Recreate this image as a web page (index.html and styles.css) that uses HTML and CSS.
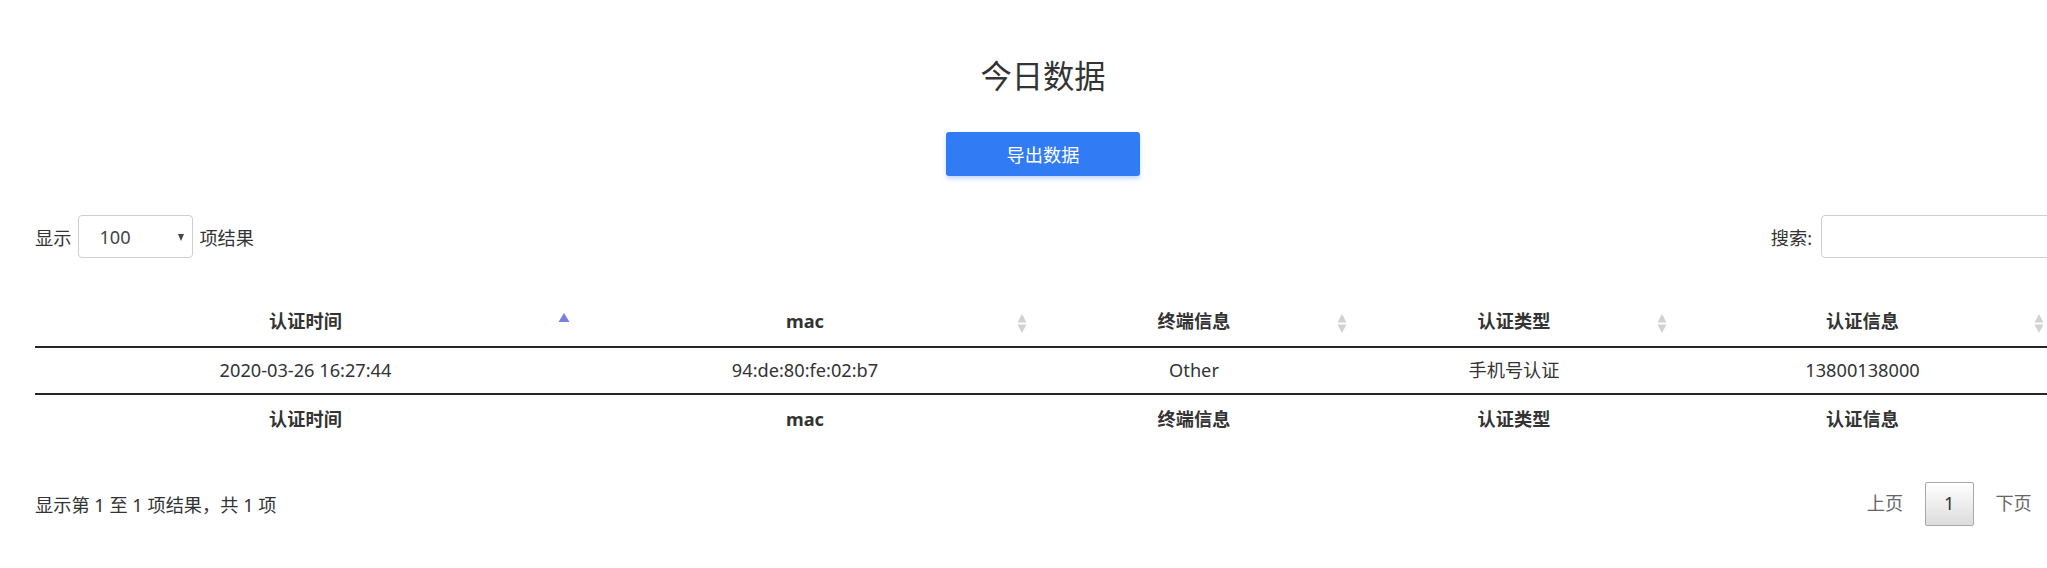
FILE: index.html
```html
<!DOCTYPE html>
<html lang="zh-CN">
<head>
<meta charset="utf-8">
<title>今日数据</title>
<link rel="stylesheet" href="styles.css">
</head>
<body>
<div class="page">
  <h2 class="title">今日数据</h2>
  <div class="actions">
    <button class="export-btn" type="button">导出数据</button>
  </div>
  <div class="toolbar">
    <div class="length">
      <span>显示</span>
      <div class="select"><span class="select-value">100</span><span class="caret"></span></div>
      <span>项结果</span>
    </div>
    <div class="filter">
      <span>搜索:</span>
      <input class="search-input" type="text">
    </div>
  </div>
  <table class="data-table">
    <colgroup>
      <col class="c1"><col class="c2"><col class="c3"><col class="c4"><col class="c5">
    </colgroup>
    <thead>
      <tr>
        <th>认证时间<svg class="sort" width="12" height="22" viewBox="0 0 12 22"><polygon points="6,0 11.5,9 0.5,9" fill="#7b7fe2"/></svg></th>
        <th>mac<svg class="sort" width="12" height="22" viewBox="0 0 12 22"><polygon points="6,1 10.5,9.5 1.5,9.5" fill="#d2d2d2"/><polygon points="1.5,11.5 10.5,11.5 6,20" fill="#d2d2d2"/></svg></th>
        <th>终端信息<svg class="sort" width="12" height="22" viewBox="0 0 12 22"><polygon points="6,1 10.5,9.5 1.5,9.5" fill="#d2d2d2"/><polygon points="1.5,11.5 10.5,11.5 6,20" fill="#d2d2d2"/></svg></th>
        <th>认证类型<svg class="sort" width="12" height="22" viewBox="0 0 12 22"><polygon points="6,1 10.5,9.5 1.5,9.5" fill="#d2d2d2"/><polygon points="1.5,11.5 10.5,11.5 6,20" fill="#d2d2d2"/></svg></th>
        <th>认证信息<svg class="sort" width="12" height="22" viewBox="0 0 12 22"><polygon points="6,1 10.5,9.5 1.5,9.5" fill="#d2d2d2"/><polygon points="1.5,11.5 10.5,11.5 6,20" fill="#d2d2d2"/></svg></th>
      </tr>
    </thead>
    <tbody>
      <tr>
        <td>2020-03-26 16:27:44</td>
        <td>94:de:80:fe:02:b7</td>
        <td>Other</td>
        <td>手机号认证</td>
        <td>13800138000</td>
      </tr>
    </tbody>
    <tfoot>
      <tr>
        <th>认证时间</th>
        <th>mac</th>
        <th>终端信息</th>
        <th>认证类型</th>
        <th>认证信息</th>
      </tr>
    </tfoot>
  </table>
  <div class="bottom">
    <div class="info">显示第 1 至 1 项结果，共 1 项</div>
    <div class="paginate">
      <span class="page-btn">上页</span>
      <span class="page-btn current">1</span>
      <span class="page-btn">下页</span>
    </div>
  </div>
</div>
</body>
</html>
```

FILE: styles.css
```css
html, body {
  margin: 0;
  padding: 0;
  overflow-x: hidden;
  background: #fff;
}

body {
  font-family: "Noto Sans", "Noto Sans CJK SC", sans-serif;
  font-size: 18.2px;
  color: #333;
}

.page {
  width: 2016px;
  margin-left: 35px;
}

.title {
  margin: 57px 0 0;
  font-size: 31.3px;
  line-height: 38px;
  font-weight: 400;
  text-align: center;
  color: #333;
}

.actions {
  display: flex;
  justify-content: center;
  margin-top: 37px;
}

.export-btn {
  width: 194px;
  height: 44px;
  border: 0;
  border-radius: 3px;
  background: #317bf5;
  color: #fff;
  font-family: "Noto Sans", "Noto Sans CJK SC", sans-serif;
  font-size: 18.2px;
  box-shadow: 0 3px 4px rgba(49, 123, 245, 0.28);
  padding: 0;
}

.toolbar {
  display: flex;
  justify-content: space-between;
  align-items: center;
  margin-top: 39px;
  height: 43px;
}

.length, .filter {
  display: flex;
  align-items: center;
}

.select {
  box-sizing: border-box;
  width: 115px;
  height: 43px;
  margin: 0 6px 0 7px;
  border: 1px solid #cfcfcf;
  border-radius: 4px;
  display: flex;
  align-items: center;
  justify-content: space-between;
  padding: 0 8px 0 20px;
  color: #444;
}

.caret {
  width: 0;
  height: 0;
  border-left: 3.5px solid transparent;
  border-right: 3.5px solid transparent;
  border-top: 7px solid #444;
  margin-top: 1px;
}

.search-input {
  box-sizing: border-box;
  width: 230px;
  height: 43px;
  margin-left: 9px;
  border: 1px solid #cfcfcf;
  border-radius: 4px;
  padding: 0 6px;
  font-size: 18.2px;
  outline: none;
}

.data-table {
  width: 2016px;
  table-layout: fixed;
  border-collapse: collapse;
  margin-top: 39px;
}

.c1 { width: 541px; }
.c2 { width: 458px; }
.c3 { width: 320px; }
.c4 { width: 320px; }
.c5 { width: 377px; }

.data-table th,
.data-table td {
  text-align: center;
  line-height: 23.4px;
  color: #333;
}

.data-table thead th {
  position: relative;
  padding: 13px 13px;
  font-weight: 700;
  border-bottom: 2px solid #262626;
}

.data-table tbody td {
  padding: 10.4px 13px;
  font-weight: 400;
}

.data-table tfoot th {
  padding: 13px 13px 7.8px;
  font-weight: 700;
  border-top: 2px solid #262626;
}

.sort {
  position: absolute;
  right: 6px;
  top: 16px;
}

.bottom {
  display: flex;
  justify-content: space-between;
  align-items: center;
  margin-top: 43px;
  height: 44px;
}

.info {
  color: #333;
}

.paginate {
  display: flex;
  align-items: center;
}

.page-btn {
  box-sizing: border-box;
  padding: 9.1px 18.2px;
  line-height: 23.4px;
  border: 1px solid transparent;
  border-radius: 2px;
  margin-left: 2.6px;
  color: #666;
}

.page-btn.current {
  color: #333;
  border: 1px solid #a8a8a8;
  background: linear-gradient(to bottom, #ffffff 0%, #dcdcdc 100%);
}
```
